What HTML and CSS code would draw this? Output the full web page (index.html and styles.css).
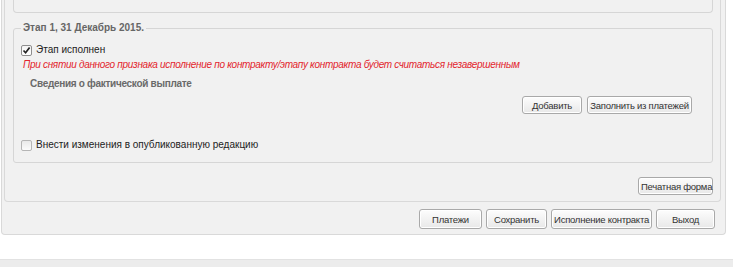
FILE: index.html
```html
<!DOCTYPE html>
<html lang="ru">
<head>
  <meta charset="UTF-8">
  <title>Исполнение контракта</title>
  <link rel="stylesheet" href="styles.css">
</head>
<body>

<div class="panel outer">
  <div class="panel inner">
    <!-- previous block, cut by the top of the window -->
    <div class="top-box"></div>

    <fieldset class="stage">
      <legend>Этап 1, 31 Декабрь 2015.</legend>

      <label class="check first">
        <span class="box checked">
          <svg width="9" height="9" viewBox="0 0 9 9"><path d="M1.5 4.5 L3.6 6.8 L7.6 1.6" fill="none" stroke="#222" stroke-width="1.7"/></svg>
        </span>
        Этап исполнен
      </label>
      <p class="warn">При снятии данного признака исполнение по контракту/этапу контракта будет считаться незавершенным</p>

      <div class="subhead">Сведения о фактической выплате</div>
      <div class="btn-row">
        <button class="btn w-add">Добавить</button>
        <button class="btn w-fill">Заполнить из платежей</button>
      </div>

      <label class="check second">
        <span class="box"></span>
        Внести изменения в опубликованную редакцию
      </label>
    </fieldset>

    <div class="btn-row print-row">
      <button class="btn w-print">Печатная форма</button>
    </div>
  </div>

  <!-- Form actions -->
  <div class="btn-row actions">
    <button class="btn w-pay">Платежи</button>
    <button class="btn w-save">Сохранить</button>
    <button class="btn w-exec">Исполнение контракта</button>
    <button class="btn w-exit">Выход</button>
  </div>
</div>

<div class="statusbar"></div>

</body>
</html>
```

FILE: styles.css
```css
* {
  box-sizing: border-box;
}
html, body {
  height: 100%;
}
body {
  margin: 0;
  background: #fff;
  font-family: "Liberation Sans", Arial, sans-serif;
  font-size: 10px;
  color: #222;
  overflow: hidden;
}

/* Panels */
.panel {
  background: #f1f1f1;
  border: 1px solid #d9d9d9;
  border-top: none;
  border-radius: 0 0 4px 4px;
}
.outer {
  width: 725px;
  margin-left: 1px;
  padding: 0 4px 5px 2px;
}
.inner {
  padding: 0 7px 6px 8px;
}

.top-box {
  height: 13px;
  border: 1px solid #d6d6d6;
  border-top: none;
  border-radius: 0 0 4px 4px;
}

/* Stage fieldset */
.stage {
  margin: 8px 0 0;
  padding: 0 20px 10px 7px;
  border: 1px solid #d6d6d6;
  border-radius: 3px;
}
.stage legend {
  padding: 0 2px;
  font-weight: bold;
  line-height: 14px;
  color: #666;
}

.check {
  display: flex;
  align-items: center;
  gap: 4px;
  line-height: 14px;
}
.check.first {
  margin-top: 8px;
}
.check.second {
  margin-top: 24px;
}
.box {
  width: 11px;
  height: 11px;
  display: flex;
  align-items: center;
  justify-content: center;
  border: 1px solid #b5b5b5;
  border-radius: 2px;
  background: linear-gradient(#e9e9e9, #fbfbfb);
}
.box.checked {
  border-color: #8e8e8e;
  background: linear-gradient(#f4f4f4, #ffffff);
}

.warn {
  margin: 1px 0 0 2px;
  line-height: 14px;
  font-style: italic;
  letter-spacing: -0.3px;
  color: #e3252d;
}

.subhead {
  margin: 5px 0 0 9px;
  line-height: 14px;
  font-weight: bold;
  letter-spacing: -0.3px;
  color: #6a6a6a;
}

/* Buttons */
.btn-row {
  display: flex;
  justify-content: flex-end;
  gap: 5px;
  margin-top: 5px;
}
.print-row {
  margin-top: 14px;
}
.actions {
  margin-top: 7px;
  padding-right: 6px;
  gap: 4px;
}
.btn {
  height: 18px;
  padding: 0 2px;
  font-family: "Liberation Sans", Arial, sans-serif;
  font-size: 9.5px;
  letter-spacing: -0.25px;
  white-space: nowrap;
  color: #333;
  background: linear-gradient(#fdfdfd, #e8e8e8);
  border: 1px solid #a9a9a9;
  border-radius: 3px;
  box-shadow: inset 0 0 0 1px #fff;
  cursor: pointer;
}
.actions .btn {
  height: 20px;
}
.w-add { width: 60px; }
.w-fill { width: 105px; }
.w-print { width: 75px; }
.w-pay { width: 63px; }
.w-save { width: 61px; }
.w-exec { width: 101px; }
.w-exit { width: 59px; }

.statusbar {
  margin-top: 24px;
  height: 20px;
  background: #ececec;
  border-top: 1px solid #e2e2e2;
}
```
